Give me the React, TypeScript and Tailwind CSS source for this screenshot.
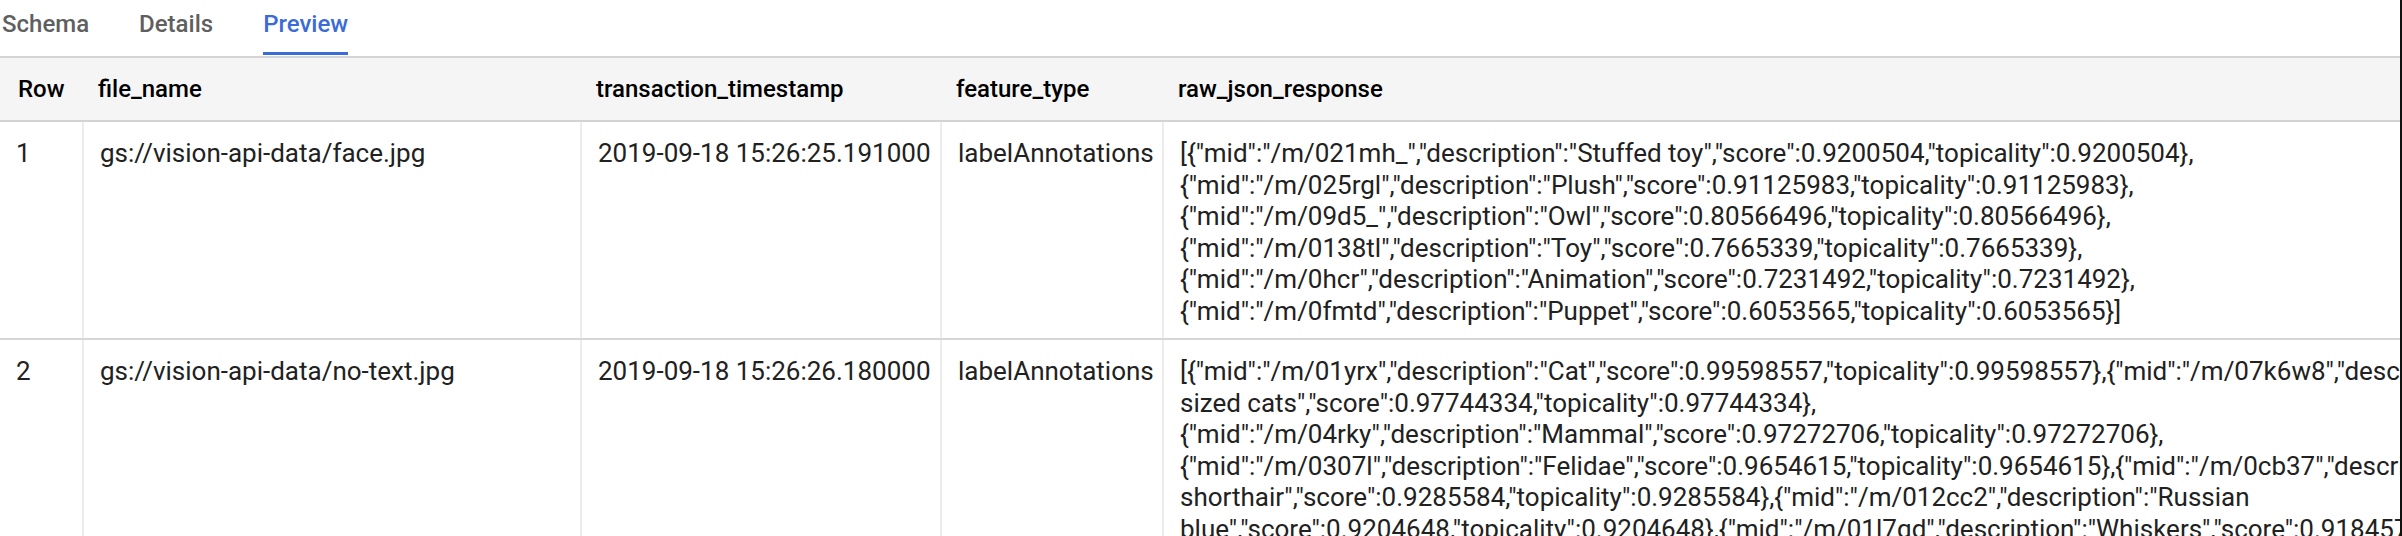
import React from "react"

const cols = "grid grid-cols-[82px_498px_360px_222px_1fr]"

const rows = [
  {
    n: "1",
    file: "gs://vision-api-data/face.jpg",
    ts: "2019-09-18 15:26:25.191000",
    type: "labelAnnotations",
    json: [
      '[{"mid":"/m/021mh_","description":"Stuffed toy","score":0.9200504,"topicality":0.9200504},',
      '{"mid":"/m/025rgl","description":"Plush","score":0.91125983,"topicality":0.91125983},',
      '{"mid":"/m/09d5_","description":"Owl","score":0.80566496,"topicality":0.80566496},',
      '{"mid":"/m/0138tl","description":"Toy","score":0.7665339,"topicality":0.7665339},',
      '{"mid":"/m/0hcr","description":"Animation","score":0.7231492,"topicality":0.7231492},',
      '{"mid":"/m/0fmtd","description":"Puppet","score":0.6053565,"topicality":0.6053565}]',
    ],
  },
  {
    n: "2",
    file: "gs://vision-api-data/no-text.jpg",
    ts: "2019-09-18 15:26:26.180000",
    type: "labelAnnotations",
    json: [
      '[{"mid":"/m/01yrx","description":"Cat","score":0.99598557,"topicality":0.99598557},{"mid":"/m/07k6w8","description":"Small to medium-',
      'sized cats","score":0.97744334,"topicality":0.97744334},',
      '{"mid":"/m/04rky","description":"Mammal","score":0.97272706,"topicality":0.97272706},',
      '{"mid":"/m/0307l","description":"Felidae","score":0.9654615,"topicality":0.9654615},{"mid":"/m/0cb37","description":"European',
      'shorthair","score":0.9285584,"topicality":0.9285584},{"mid":"/m/012cc2","description":"Russian',
      'blue","score":0.9204648,"topicality":0.9204648},{"mid":"/m/01l7qd","description":"Whiskers","score":0.91845727,"topicality":0.91845727},',
      '{"mid":"/m/0k0pj","description":"Nose","score":0.89510441,"topicality":0.89510441}]',
    ],
  },
]

function Tab({ label, active }: { label: string; active?: boolean }) {
  return (
    <div className="flex flex-col h-full">
      <span
        className={
          "pt-[10px] leading-[28px] font-medium " +
          (active ? "text-[#3b6bd6]" : "text-[#5f5f5f]")
        }
      >
        {label}
      </span>
      <div className={"mt-auto mb-[1px] h-[3px] " + (active ? "bg-[#3b6bd6]" : "bg-transparent")} />
    </div>
  )
}

export default function App() {
  return (
    <div className="w-[2402px] h-[536px] overflow-hidden bg-white border-r-2 border-[#111] font-['Roboto',sans-serif] text-[24px] text-[#212121]">
      <div className="flex h-[56px] gap-[50px] pl-[2px]">
        <Tab label="Schema" />
        <Tab label="Details" />
        <Tab label="Preview" active />
      </div>

      <div className={cols + " h-[66px] items-center bg-[#f5f5f5] border-y-2 border-[#d3d3d3] font-medium text-black"}>
        <div className="pl-[18px]">Row</div>
        <div className="pl-[16px]">file_name</div>
        <div className="pl-[16px]">transaction_timestamp</div>
        <div className="pl-[16px]">feature_type</div>
        <div className="pl-[16px]">raw_json_response</div>
      </div>

      {rows.map((r) => (
        <div key={r.n} className={cols + " border-b-2 border-[#d6d6d6] text-[26px] leading-[31.5px]"}>
          <div className="pl-[16px] pt-[16px] pb-[11px]">{r.n}</div>
          <div className="pl-[16px] pt-[16px] border-l-2 border-[#ececec]">{r.file}</div>
          <div className="pl-[16px] pt-[16px] border-l-2 border-[#ececec]">{r.ts}</div>
          <div className="pl-[16px] pt-[16px] border-l-2 border-[#ececec]">{r.type}</div>
          <div className="pl-[16px] pt-[16px] pb-[11px] border-l-2 border-[#ececec] min-w-0">
            {r.json.map((line, i) => (
              <div key={i} className="whitespace-nowrap">
                {line}
              </div>
            ))}
          </div>
        </div>
      ))}
    </div>
  )
}
